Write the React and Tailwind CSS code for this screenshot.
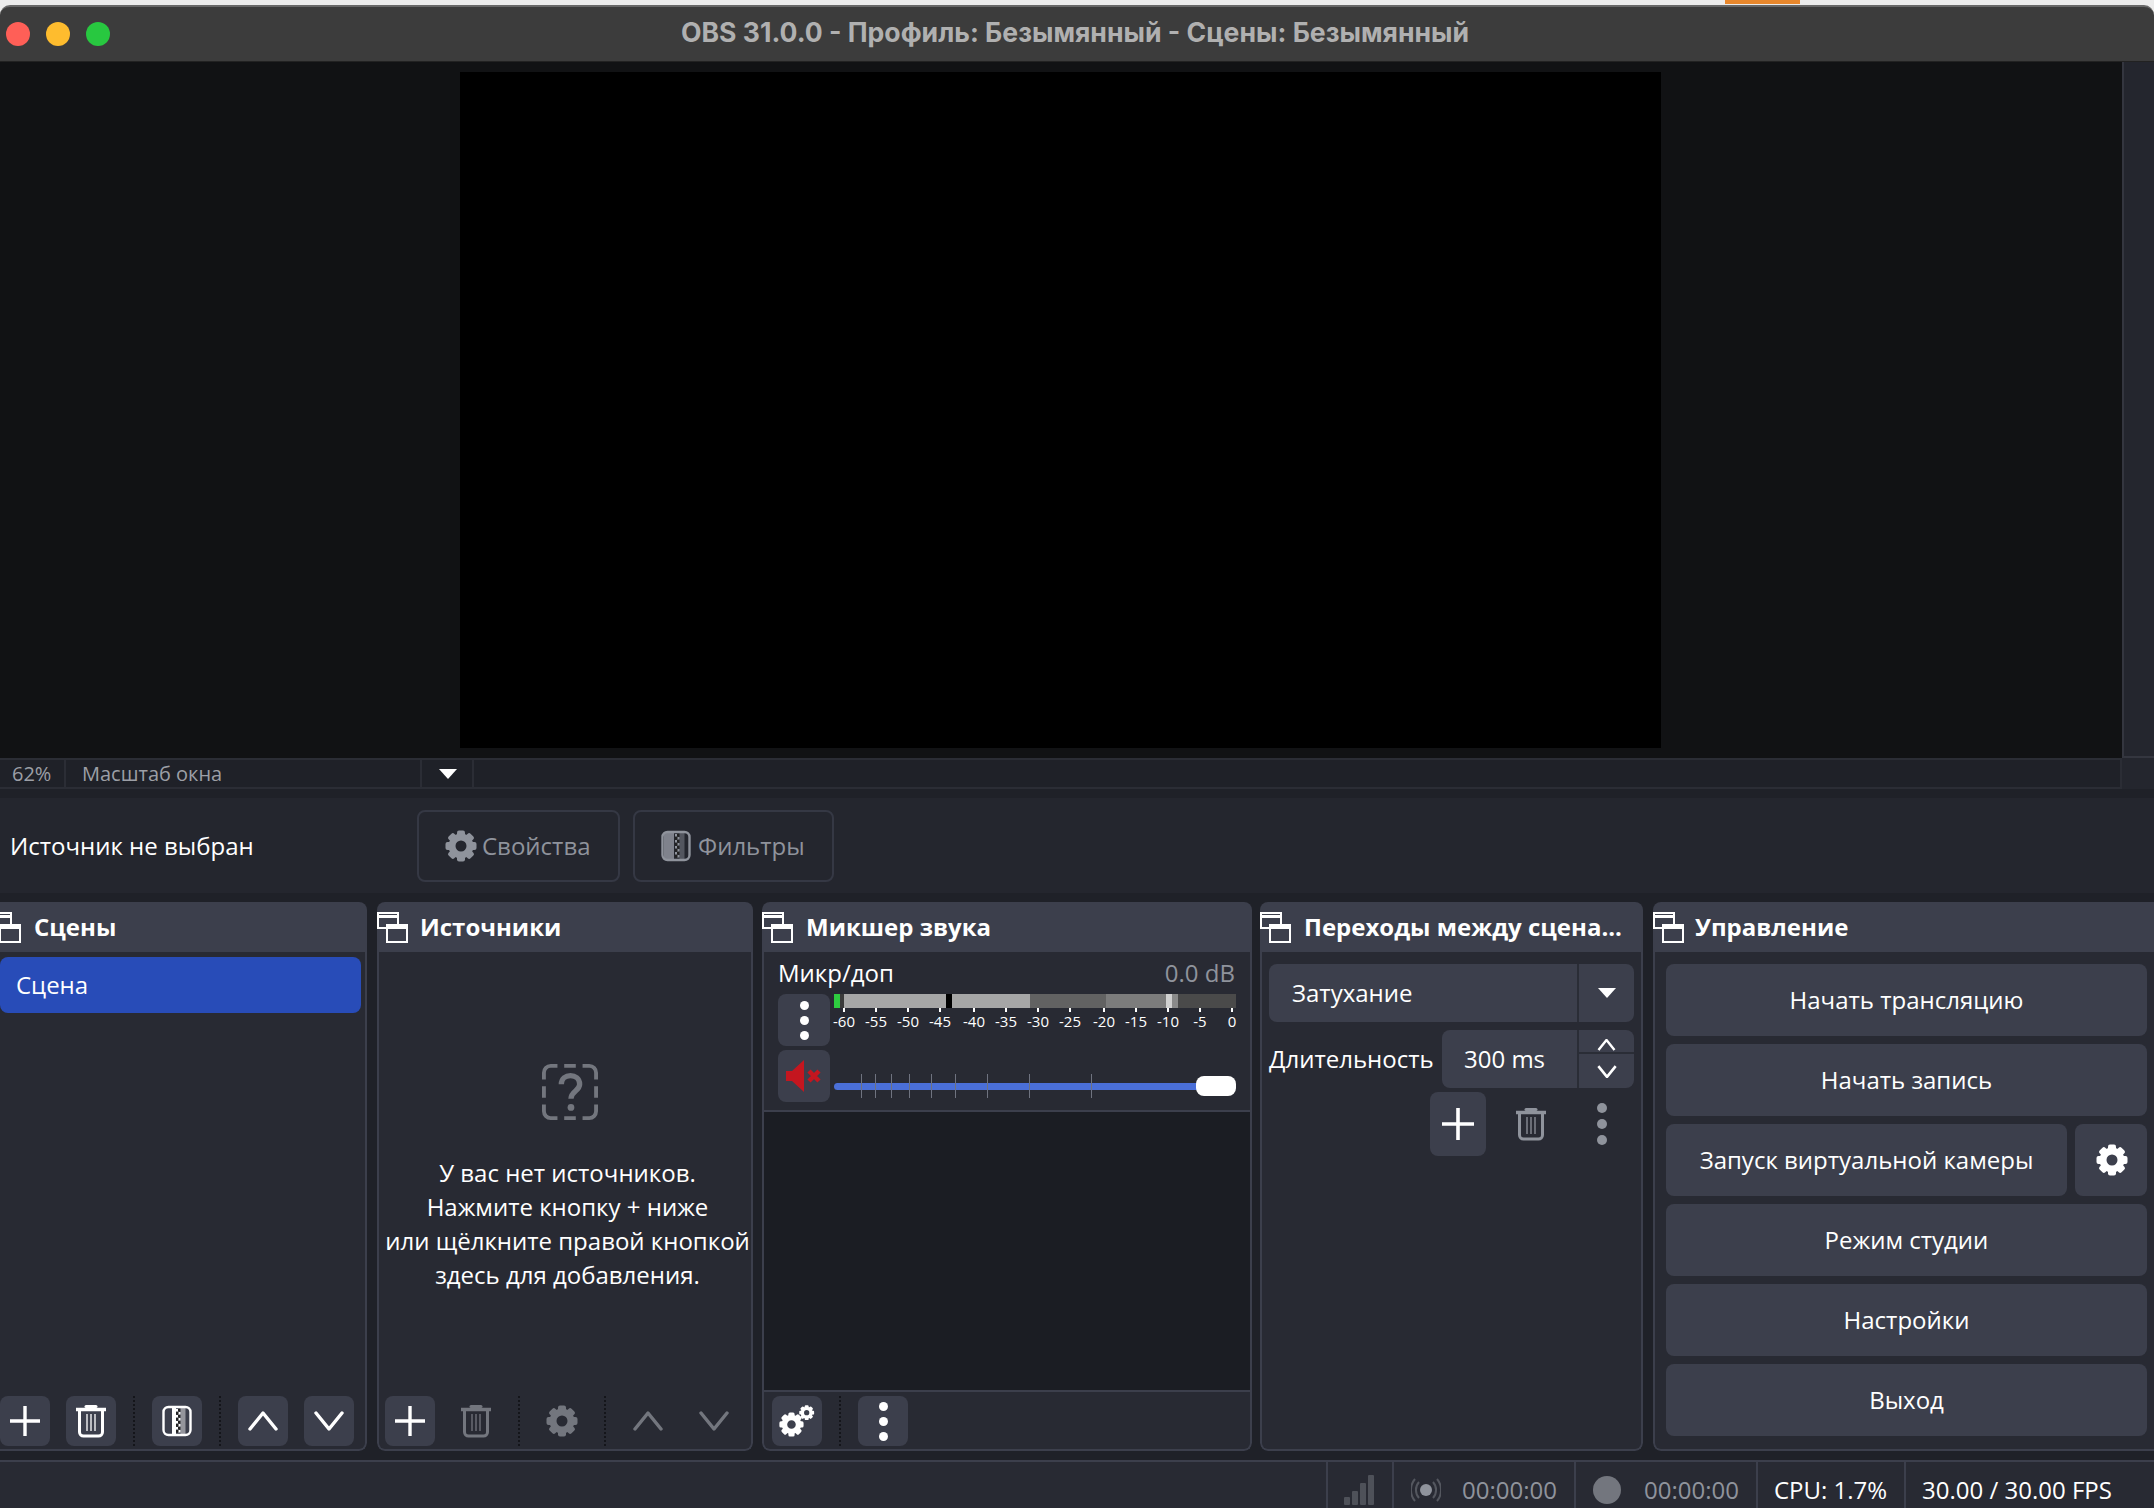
import React from "react";

const scale = ["-60","-55","-50","-45","-40","-35","-30","-25","-20","-15","-10","-5","0"];
const sliderTicks = ["ml-[27px]","ml-[13px]","ml-[15px]","ml-[17px]","ml-[21px]","ml-[23px]","ml-[31px]","ml-[41px]","ml-[61px]"];
const teeth = [0, 45, 90, 135, 180, 225, 270, 315];

function DockIcon() {
    return (
        <svg width="31" height="31" viewBox="0 0 31 31" fill="none" stroke="#fff" strokeWidth="2" className="shrink-0">
            <path d="M1 17V1h20v12" />
            <path d="M1 4.5h20" strokeWidth="3" />
            <path d="M1 16h9" />
            <rect x="10" y="13" width="20" height="17" />
            <path d="M10 15.5h20" strokeWidth="3" />
        </svg>
    );
}

function GearShape({ color = "#fff" }) {
    return (
        <>
            {teeth.map((a) => (
                <rect key={a} x="12" y="0.5" width="8" height="8" rx="2" fill={color} transform={`rotate(${a} 16 16)`} />
            ))}
            <circle cx="16" cy="16" r="9" fill="none" stroke={color} strokeWidth="7" />
        </>
    );
}

function Gear({ size = 32, color = "#fff" }) {
    return (
        <svg width={size} height={size} viewBox="0 0 32 32" className="shrink-0">
            <GearShape color={color} />
        </svg>
    );
}

function Trash({ color = "#fff" }) {
    return (
        <svg width="32" height="34" viewBox="0 0 32 34" fill="none" stroke={color} className="shrink-0">
            <path d="M11 2.5h10" strokeWidth="3" strokeLinecap="round" />
            <path d="M1 5.5h30" strokeWidth="3.5" />
            <path d="M4.5 7v21a4 4 0 0 0 4 4h15a4 4 0 0 0 4-4V7" strokeWidth="3" />
            <path d="M12 10v17M16 10v17M20 10v17" strokeWidth="1.3" />
        </svg>
    );
}

function FilterIcon({ color = "#fff", fillLeft }) {
    const rows = [0, 1, 2, 3, 4, 5, 6, 7];
    return (
        <svg width="32" height="32" viewBox="0 0 32 32" className="shrink-0">
            {fillLeft && <rect x="4" y="3" width="10" height="26" fill={color} opacity="0.85" />}
            {!fillLeft && <rect x="11" y="3" width="4" height="26" fill={color} />}
            {rows.map((i) => (
                <rect key={i} x={i % 2 ? 17 : 15} y={4 + i * 3} width="2.5" height="2.5" fill={color} />
            ))}
            {rows.map((i) => (
                <rect key={i} x={i % 2 ? 15 : 17} y={4 + i * 3} width="2.5" height="2.5" fill="#222" />
            ))}
            <rect x="19.5" y="3" width="5" height="26" fill={color} opacity="0.45" />
            <rect x="2.5" y="2" width="27" height="28" rx="5" fill="none" stroke={color} strokeWidth="2.4" />
        </svg>
    );
}

function Chevron({ up, color = "#fff" }) {
    return (
        <svg width="30" height="30" viewBox="0 0 30 30" fill="none" stroke={color} strokeWidth="3.4" strokeLinecap="round" strokeLinejoin="round" className="shrink-0">
            <path d={up ? "M2 23L15 7l13 16" : "M2 7l13 16L28 7"} />
        </svg>
    );
}

function Plus() {
    return (
        <svg width="30" height="30" viewBox="0 0 30 30" stroke="#fff" strokeWidth="3.4" className="shrink-0">
            <path d="M15 0v30M0 15h30" />
        </svg>
    );
}

function Dots({ color = "#fff", size = 8 }) {
    return (
        <div className="flex flex-col items-center gap-[6px]">
            <svg width={size} height={size} viewBox="0 0 8 8" className="shrink-0"><circle cx="4" cy="4" r="4" fill={color} /></svg>
            <svg width={size} height={size} viewBox="0 0 8 8" className="shrink-0"><circle cx="4" cy="4" r="4" fill={color} /></svg>
            <svg width={size} height={size} viewBox="0 0 8 8" className="shrink-0"><circle cx="4" cy="4" r="4" fill={color} /></svg>
        </div>
    );
}

function Tool({ bg, children }) {
    return (
        <div className={"w-[50px] h-[50px] shrink-0 rounded-lg flex items-center justify-center " + (bg ? "bg-[#3c3f4c]" : "")}>
            {children}
        </div>
    );
}

function Sep() {
    return <div className="h-[50px] mx-[17px] border-l-2 border-dotted border-[#14151a] shrink-0"></div>;
}

function Dock({ title, className, titleClass, children }) {
    return (
        <div className={"h-full shrink-0 flex flex-col rounded-lg overflow-hidden " + className}>
            <div className="h-[50px] shrink-0 bg-[#3c3f4c] flex items-center">
                <DockIcon />
                <span className={"font-bold text-[24px] text-white whitespace-nowrap " + titleClass}>{title}</span>
            </div>
            <div className="flex-1 min-h-0 flex flex-col border-2 border-t-0 border-[#3c3f4c] rounded-b-lg bg-[#282a33]">
                {children}
            </div>
        </div>
    );
}

function Ctl({ children, className = "" }) {
    return (
        <div className={"h-[72px] shrink-0 bg-[#3c3f4c] rounded-lg flex items-center justify-center text-[24px] text-white " + className}>
            {children}
        </div>
    );
}

function Stat({ className, children }) {
    return <div className={"h-full flex items-center pt-[10px] border-l-2 border-[#3c3f4c] shrink-0 " + className}>{children}</div>;
}

export default function App() {
    return (
        <div className="w-[2154px] h-[1508px] overflow-hidden flex flex-col bg-[#1f2128] font-['Open_Sans',sans-serif] text-white">
            <div className="h-[62px] shrink-0 bg-[#ececec] flex flex-col relative">
                <div className="absolute top-0 left-[1725px] w-[75px] h-[4px] bg-[#e8872c]"></div>
                <div className="mt-[5px] flex-1 bg-[#3c3c3c] border-t-2 border-[#686868] rounded-t-[10px] border-b border-b-[#222] flex items-center pl-[6px] gap-[16px]">
                    <div className="w-[24px] h-[24px] rounded-full bg-[#ff5f57]"></div>
                    <div className="w-[24px] h-[24px] rounded-full bg-[#febc2e]"></div>
                    <div className="w-[24px] h-[24px] rounded-full bg-[#28c840]"></div>
                    <div className="flex-1 text-center pr-[130px] pb-[2px] font-['Inter',sans-serif] font-bold text-[26.6px] text-[#b0b0b0] whitespace-nowrap">
                        OBS 31.0.0 - Профиль: Безымянный - Сцены: Безымянный
                    </div>
                </div>
            </div>
            <div className="h-[696px] shrink-0 flex bg-[#111214]">
                <div className="w-[2122px] shrink-0 pl-[460px] pt-[10px]">
                    <div className="w-[1201px] h-[676px] bg-black"></div>
                </div>
                <div className="flex-1 border-l-2 border-b-2 border-[#34363f] bg-[#24262e]"></div>
            </div>
            <div className="h-[31px] shrink-0 flex">
                <div className="w-[2122px] shrink-0 flex bg-[#1f2128] border-2 border-l-0 border-[#2b2d35] text-[20px] text-[#9c9fa6]">
                    <div className="w-[66px] pl-[12px] flex items-center border-r-2 border-[#2b2d35]">62%</div>
                    <div className="w-[356px] pl-[16px] flex items-center border-r-2 border-[#2b2d35]">Масштаб окна</div>
                    <div className="w-[52px] flex items-center justify-center border-r-2 border-[#2b2d35] pl-[2px]">
                        <div className="w-0 h-0 border-x-[9px] border-x-transparent border-t-[10px] border-t-white"></div>
                    </div>
                </div>
                <div className="flex-1 bg-[#24262e]"></div>
            </div>
            <div className="h-[9px] shrink-0"></div>
            <div className="h-[95px] shrink-0 bg-[#24262e] flex items-center pl-[10px] pt-[1px] text-[24px]">
                <div className="w-[407px]">Источник не выбран</div>
                <div className="w-[203px] h-[72px] rounded-lg border-2 border-[#353844] flex items-center pl-[26px] gap-[5px] text-[#8f939c]">
                    <Gear color="#8f939c" />
                    <span>Свойства</span>
                </div>
                <div className="ml-[13px] w-[201px] h-[72px] rounded-lg border-2 border-[#353844] flex items-center pl-[25px] gap-[6px] text-[#8f939c]">
                    <FilterIcon color="#8f939c" fillLeft />
                    <span>Фильтры</span>
                </div>
            </div>
            <div className="h-[9px] shrink-0"></div>

            <div className="h-[549px] shrink-0 flex -ml-[10px]">
                <Dock title="Сцены" className="w-[377px]" titleClass="ml-[13px]">
                    <div className="pt-[5px] pl-[8px] pr-[4px] flex-1">
                        <div className="h-[56px] rounded-lg bg-[#284cb8] flex items-center pl-[16px] text-[24px]">Сцена</div>
                    </div>
                    <div className="flex pl-[8px] pb-[3px]">
                        <Tool bg><Plus /></Tool>
                        <div className="w-4"></div>
                        <Tool bg><Trash /></Tool>
                        <Sep />
                        <Tool bg><FilterIcon /></Tool>
                        <Sep />
                        <Tool bg><Chevron up /></Tool>
                        <div className="w-4"></div>
                        <Tool bg><Chevron /></Tool>
                    </div>
                </Dock>
                <div className="w-[10px] shrink-0"></div>
                <Dock title="Источники" className="w-[376px]" titleClass="ml-[12px]">
                    <div className="flex-1 flex flex-col items-center pt-[112px] pl-[5px]">
                        <svg width="56" height="56" viewBox="0 0 58 58" fill="none" stroke="#73767e" strokeWidth="4" className="shrink-0 ml-[5px]">
                            <path d="M2 16V9a7 7 0 0 1 7-7h7M23 2h12M42 2h7a7 7 0 0 1 7 7v7M56 23v12M56 42v7a7 7 0 0 1-7 7h-7M35 56H23M16 56H9a7 7 0 0 1-7-7v-7M2 35V23" />
                            <path d="M20 21c0-12 19-12 19 0 0 7-9 7-9 15" strokeWidth="5.5" />
                            <circle cx="30" cy="45" r="3.5" fill="#73767e" stroke="none" />
                        </svg>
                        <div className="mt-[36px] text-center text-[24px] leading-[34px] text-white whitespace-nowrap">
                            <div>У вас нет источников.</div>
                            <div>Нажмите кнопку + ниже</div>
                            <div>или щёлкните правой кнопкой</div>
                            <div>здесь для добавления.</div>
                        </div>
                    </div>
                    <div className="flex pl-[6px] pb-[3px]">
                        <Tool bg><Plus /></Tool>
                        <div className="w-4"></div>
                        <Tool><Trash color="#73767e" /></Tool>
                        <Sep />
                        <Tool><Gear color="#73767e" /></Tool>
                        <Sep />
                        <Tool><Chevron up color="#73767e" /></Tool>
                        <div className="w-4"></div>
                        <Tool><Chevron color="#73767e" /></Tool>
                    </div>
                </Dock>
                <div className="w-[9px] shrink-0"></div>
                <Dock title="Микшер звука" className="w-[490px]" titleClass="ml-[13px]">
                    <div className="h-[160px] shrink-0 flex flex-col px-[14px] border-b-2 border-[#3c3f4c]">
                        <div className="h-[42px] shrink-0 flex items-center justify-between text-[24px]">
                            <span>Микр/доп</span>
                            <span className="text-[#8f939c] pr-[1px]">0.0 dB</span>
                        </div>
                        <div className="flex gap-[4px]">
                            <div className="w-[52px] h-[52px] shrink-0 rounded-lg bg-[#3c3f4c] flex items-center justify-center">
                                <Dots size={9} />
                            </div>
                            <div className="w-[402px] shrink-0">
                                <div className="h-[14px] flex">
                                    <div className="w-[6px] bg-[#2ecc40]"></div>
                                    <div className="w-[4px] bg-[#3a3a3a]"></div>
                                    <div className="w-[102px] bg-[#a6a6a6]"></div>
                                    <div className="w-[6px] bg-black"></div>
                                    <div className="w-[78px] bg-[#a6a6a6]"></div>
                                    <div className="w-[76px] bg-[#626262]"></div>
                                    <div className="w-[60px] bg-[#7c7c7c]"></div>
                                    <div className="w-[6px] bg-[#d0d0d0]"></div>
                                    <div className="w-[6px] bg-[#8a8a8a]"></div>
                                    <div className="w-[58px] bg-[#4a4a4a]"></div>
                                </div>
                                <div className="flex -ml-[6px]">
                                    {scale.map((s) => (
                                        <div key={s} className={"w-[32px] shrink-0 flex flex-col items-center text-[15px] leading-[18px] text-white " + (s === "-40" || s === "-20" ? "ml-[2px]" : "")}>
                                            <div className="w-[2px] h-[4px] bg-white"></div>
                                            <span>{s}</span>
                                        </div>
                                    ))}
                                </div>
                            </div>
                        </div>
                        <div className="flex gap-[4px] mt-[4px]">
                            <div className="w-[52px] h-[52px] shrink-0 rounded-lg bg-[#3c3f4c] flex items-center justify-center">
                                <svg width="36" height="32" viewBox="0 0 36 32" className="shrink-0">
                                    <path d="M0 11h6L18 0v32L6 21H0z" fill="#c4161f" />
                                    <path d="M23 11l10 10M33 11L23 21" stroke="#c4161f" strokeWidth="4.5" fill="none" />
                                </svg>
                            </div>
                            <div className="w-[402px] h-[52px] shrink-0 flex items-end pb-[4px]">
                                <div className="relative w-full h-[24px] flex items-center">
                                    <div className="w-full h-[7px] rounded-full bg-[#4a6fd8]"></div>
                                    <div className="absolute inset-0 flex">
                                        {sliderTicks.map((t, i) => (
                                            <div key={i} className={"w-[1px] h-full bg-[#6f7380] shrink-0 " + t}></div>
                                        ))}
                                    </div>
                                    <div className="absolute right-0 top-[2px] w-[40px] h-[20px] rounded-lg bg-white"></div>
                                </div>
                            </div>
                        </div>
                    </div>
                    <div className="flex-1 bg-[#1b1d23] border-b-2 border-[#3c3f4c]"></div>
                    <div className="flex pt-[4px] pl-[8px] pb-[3px] shrink-0">
                        <Tool bg>
                            <svg width="36" height="34" viewBox="0 0 36 34" className="shrink-0">
                                <g transform="translate(0 8) scale(0.78)"><GearShape /></g>
                                <g transform="translate(20 1) scale(0.48)"><GearShape /></g>
                            </svg>
                        </Tool>
                        <Sep />
                        <Tool bg><Dots size={9} /></Tool>
                    </div>
                </Dock>
                <div className="w-[8px] shrink-0"></div>
                <Dock title="Переходы между сцена..." className="w-[383px]" titleClass="ml-[13px]">
                    <div className="px-[7px] pt-[12px]">
                        <div className="h-[58px] rounded-lg bg-[#3c3f4c] flex items-center text-[24px]">
                            <div className="w-[310px] h-full pl-[23px] flex items-center border-r-2 border-[#2a2d36]">Затухание</div>
                            <div className="flex-1 flex items-center justify-center">
                                <div className="w-0 h-0 border-x-[9px] border-x-transparent border-t-[10px] border-t-white"></div>
                            </div>
                        </div>
                        <div className="mt-[8px] flex items-center text-[24px]">
                            <div className="w-[173px] whitespace-nowrap">Длительность</div>
                            <div className="flex-1 h-[58px] rounded-lg bg-[#3c3f4c] flex items-center">
                                <div className="w-[137px] h-full pl-[22px] flex items-center border-r-2 border-[#2a2d36]">300 ms</div>
                                <div className="flex-1 h-full flex flex-col items-center">
                                    <div className="h-[24px] w-full flex items-end justify-center border-b-2 border-[#2a2d36] pb-[1px]">
                                        <svg width="19" height="12" viewBox="0 0 18 12" fill="none" stroke="#fff" strokeWidth="2.4" className="shrink-0"><path d="M1 11l8-10 8 10" /></svg>
                                    </div>
                                    <div className="flex-1 flex items-center">
                                        <svg width="20" height="13" viewBox="0 0 18 12" fill="none" stroke="#fff" strokeWidth="2.4" className="shrink-0"><path d="M1 1l8 10 8-10" /></svg>
                                    </div>
                                </div>
                            </div>
                        </div>
                        <div className="mt-[4px] pl-[161px] flex items-center">
                            <div className="w-[56px] h-[64px] rounded-lg bg-[#3c3f4c] flex items-center justify-center">
                                <svg width="32" height="32" viewBox="0 0 32 32" stroke="#fff" strokeWidth="3.6" className="shrink-0"><path d="M16 0v32M0 16h32" /></svg>
                            </div>
                            <div className="w-[90px] flex justify-center"><Trash color="#8f939c" /></div>
                            <div className="w-[52px] flex justify-center"><Dots color="#8f939c" size={10} /></div>
                        </div>
                    </div>
                </Dock>
                <div className="w-[10px] shrink-0"></div>
                <Dock title="Управление" className="w-[520px]" titleClass="ml-[11px]">
                    <div className="pl-[11px] pr-[24px] pt-[12px] flex flex-col gap-[8px]">
                        <Ctl>Начать трансляцию</Ctl>
                        <Ctl>Начать запись</Ctl>
                        <div className="flex gap-[8px]">
                            <Ctl className="flex-1">Запуск виртуальной камеры</Ctl>
                            <Ctl className="w-[72px] pl-[2px]"><Gear /></Ctl>
                        </div>
                        <Ctl>Режим студии</Ctl>
                        <Ctl>Настройки</Ctl>
                        <Ctl>Выход</Ctl>
                    </div>
                </Dock>
            </div>

            <div className="h-[9px] shrink-0"></div>
            <div className="flex-1 flex bg-[#282a33] border-t-2 border-[#3c3f4c] pl-[1326px] text-[24px]">
                <Stat className="w-[66px] justify-center">
                    <svg width="32" height="30" viewBox="0 0 32 30" fill="#4e5159" className="shrink-0">
                        <rect x="0" y="22" width="6" height="8" rx="1" />
                        <rect x="8" y="16" width="6" height="14" rx="1" />
                        <rect x="16" y="8" width="6" height="22" rx="1" />
                        <rect x="24" y="0" width="6" height="30" rx="1" />
                    </svg>
                </Stat>
                <Stat className="w-[182px] pl-[17px] gap-[21px] text-[#8f939c]">
                    <svg width="30" height="26" viewBox="0 0 30 26" fill="none" stroke="#54575f" strokeWidth="2" className="shrink-0">
                        <circle cx="15" cy="13" r="6" fill="#8f939c" stroke="none" />
                        <path d="M8 5a12 12 0 0 0 0 16M22 5a12 12 0 0 1 0 16M4 2a17 17 0 0 0 0 22M26 2a17 17 0 0 1 0 22" />
                    </svg>
                    <span>00:00:00</span>
                </Stat>
                <Stat className="w-[182px] pl-[17px] gap-[23px] text-[#8f939c]">
                    <div className="w-[28px] h-[28px] rounded-full bg-[#73767e]"></div>
                    <span>00:00:00</span>
                </Stat>
                <Stat className="w-[148px] pl-[16px]">CPU: 1.7%</Stat>
                <Stat className="flex-1 pl-[16px] whitespace-nowrap">30.00 / 30.00 FPS</Stat>
            </div>
        </div>
    );
}
